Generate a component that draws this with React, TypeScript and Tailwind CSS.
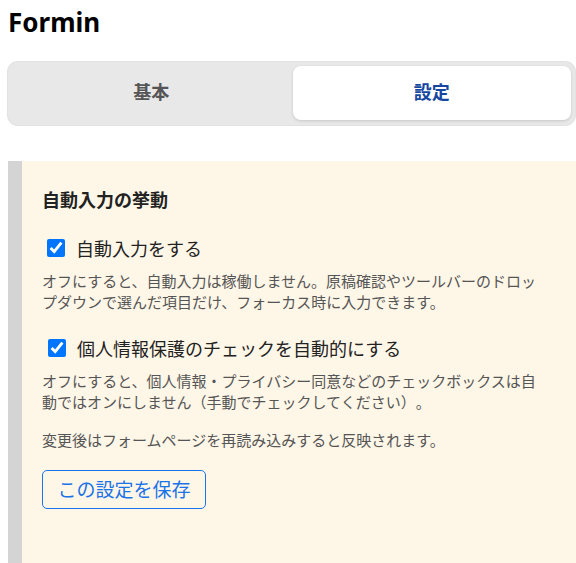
import React, { useState } from 'react';

const jp = { fontFamily: '"Noto Sans CJK JP", "Noto Sans", sans-serif' };

export default function App() {
  const [tab, setTab] = useState<'basic' | 'settings'>('settings');
  const [autoFill, setAutoFill] = useState(true);
  const [privacy, setPrivacy] = useState(true);

  return (
    <div className="min-h-[563px] bg-white pl-[8px] pt-[8px] [text-spacing-trim:space-all]" style={jp}>
      <h1
        className="text-[26px] font-bold leading-[28px] text-black"
        style={{ fontFamily: '"Noto Sans", sans-serif' }}
      >
        Formin
      </h1>

      {/* tabs */}
      <div className="mt-[26px] grid h-[63px] w-[567px] grid-cols-2 gap-[2px] rounded-[10px] bg-[#e8e8e8] px-[4px] pt-[4px] pb-[5px] shadow-[0_0_0_1px_#e2e2e2]">
        <button
          onClick={() => setTab('basic')}
          className={
            tab === 'basic'
              ? 'rounded-[8px] bg-white pb-[3px] text-[18px] font-bold text-[#1547a0] shadow-[0_1px_3px_rgba(0,0,0,0.15)]'
              : 'rounded-[8px] pb-[3px] text-[18px] font-bold text-[#555555]'
          }
        >
          基本
        </button>
        <button
          onClick={() => setTab('settings')}
          className={
            tab === 'settings'
              ? 'rounded-[8px] bg-white pb-[3px] text-[18px] font-bold text-[#1547a0] shadow-[0_1px_3px_rgba(0,0,0,0.15)]'
              : 'rounded-[8px] pb-[3px] text-[18px] font-bold text-[#555555]'
          }
        >
          設定
        </button>
      </div>

      {/* settings panel */}
      <section className="mt-[36px] min-h-[410px] w-[568px] border-l-[14px] border-[#d4d4d4] bg-[#fef6e7] pl-[20px] pt-[26px]">
        <div className="w-[512px]">
          <h2 className="text-[18px] font-bold leading-[24px] text-[#222222]">自動入力の挙動</h2>

          <label className="mt-[25px] flex h-[24px] items-center">
            <input
              type="checkbox"
              checked={autoFill}
              onChange={(e) => setAutoFill(e.target.checked)}
              className="ml-[5px] h-[18px] w-[18px] m-0"
            />
            <span className="ml-[11px] text-[18px] leading-[24px] text-[#222222]">自動入力をする</span>
          </label>
          <p className="mt-[10px] text-[15px] leading-[21px] text-[#555555]">
            オフにすると、自動入力は稼働しません。原稿確認やツールバーのドロッ
            <br />
            プダウンで選んだ項目だけ、フォーカス時に入力できます。
          </p>

          <label className="mt-[24px] flex h-[24px] items-center">
            <input
              type="checkbox"
              checked={privacy}
              onChange={(e) => setPrivacy(e.target.checked)}
              className="ml-[6px] h-[18px] w-[18px] m-0"
            />
            <span className="ml-[11px] text-[18px] leading-[24px] text-[#222222]">
              個人情報保護のチェックを自動的にする
            </span>
          </label>
          <p className="mt-[10px] text-[15px] leading-[21px] text-[#555555]">
            オフにすると、個人情報・プライバシー同意などのチェックボックスは自
            <br />
            動ではオンにしません（手動でチェックしてください）。
          </p>

          <p className="mt-[17px] text-[15px] leading-[21px] text-[#555555]">
            変更後はフォームページを再読み込みすると反映されます。
          </p>

          <button className="mt-[20px] flex h-[39px] w-[164px] items-center justify-center rounded-[5px] border border-[#1a73e8] bg-transparent text-[19px] text-[#1a73e8]">
            この設定を保存
          </button>
        </div>
      </section>
    </div>
  );
}
